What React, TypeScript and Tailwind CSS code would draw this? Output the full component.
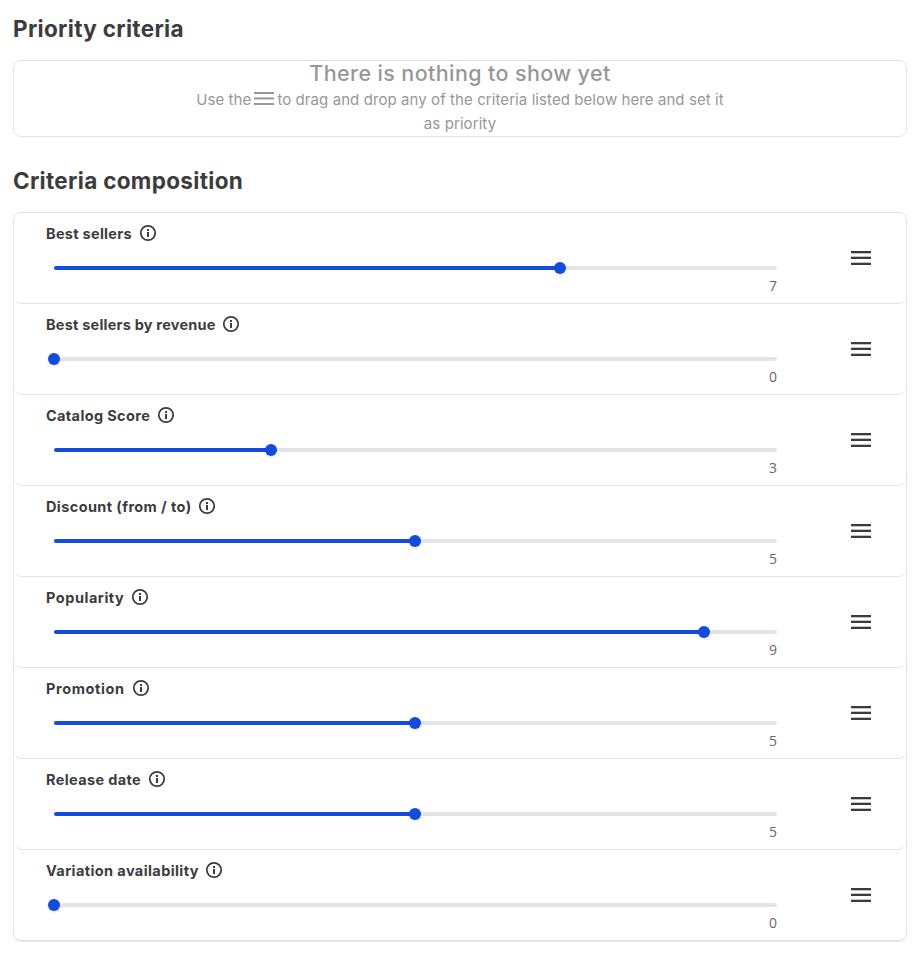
type Criterion = { name: string; value: number; label: string };

const criteria: Criterion[] = [
  { name: "Best sellers", value: 7, label: "w-[86px] tracking-[0.29px]" },
  { name: "Best sellers by revenue", value: 0, label: "w-[169px] tracking-[0.22px]" },
  { name: "Catalog Score", value: 3, label: "w-[104px] tracking-[0.36px]" },
  { name: "Discount (from / to)", value: 5, label: "w-[145px] tracking-[0.4px]" },
  { name: "Popularity", value: 9, label: "w-[78px] tracking-[0.53px]" },
  { name: "Promotion", value: 5, label: "w-[79px] tracking-[0.61px]" },
  { name: "Release date", value: 5, label: "w-[95px] tracking-[0.36px]" },
  { name: "Variation availability", value: 0, label: "w-[152px] tracking-[0.4px]" },
];

function InfoIcon() {
  return (
    <svg width="20" height="20" viewBox="0 0 20 20" className="shrink-0">
      <circle cx="10" cy="10" r="7.2" fill="none" stroke="#3c3c3c" strokeWidth="1.75" />
      <rect x="9" y="6" width="2" height="2" fill="#3c3c3c" />
      <rect x="9" y="9" width="2" height="5" fill="#3c3c3c" />
    </svg>
  );
}

function DragHandle() {
  return (
    <svg width="20" height="14" viewBox="0 0 20 14" fill="#3c3c3c" className="shrink-0">
      <rect width="20" height="2.3" />
      <rect y="5.7" width="20" height="2.3" />
      <rect y="11.7" width="20" height="2.3" />
    </svg>
  );
}

function Slider({ value }: { value: number }) {
  return (
    <div className="relative h-1 w-[723px] rounded-full bg-[#e3e4e6]">
      <div className="h-1 rounded-full bg-[#134bdc]" style={{ width: `${value * 10}%` }} />
      <div
        className="absolute -top-1 -ml-1.5 size-3 rounded-full bg-[#134bdc] shadow-[0_1px_3px_rgba(0,0,0,0.1)]"
        style={{ left: Math.round(value * 72.25) }}
      />
    </div>
  );
}

function CriterionRow({ name, value, label }: Criterion) {
  return (
    <li className="flex h-[91px] items-center justify-between rounded-[8px] border-b border-[#e3e4e6] pr-[35px] pl-8">
      <div className="h-full w-[731px] pt-[10px]">
        <div className="flex h-5 items-center gap-[6px]">
          <span className={`pt-[2px] text-[14.5px] leading-5 font-bold whitespace-nowrap ${label}`}>{name}</span>
          <InfoIcon />
        </div>
        <div className="mt-[23px] ml-2">
          <Slider value={value} />
        </div>
        <div className="mt-[6px] text-right font-['Open_Sans',sans-serif] text-[14px] leading-5 text-[#686868]">{value}</div>
      </div>
      <DragHandle />
    </li>
  );
}

export default function App() {
  return (
    <main className="h-[954px] w-[919px] bg-white pt-[13px] pr-3 pl-[13px] font-['Inter',sans-serif] text-[#3c3c3c]">
      <h2 className="h-8 text-[22.5px] leading-8 font-bold tracking-[0.32px]">Priority criteria</h2>
      <section className="mt-[15px] flex h-[77px] flex-col items-center rounded-[8px] border border-[#e3e4e6] text-[#979797]">
        <h3 className="h-[26px] text-[21.5px] leading-[24px] font-medium tracking-[0.38px] whitespace-nowrap">
          There is nothing to show yet
        </h3>
        <p className="flex h-6 items-center text-[15px] leading-6 tracking-[0.08px] whitespace-nowrap">
          <span className="pt-[2px]">Use the</span>
          <svg width="20" height="13" viewBox="0 0 20 13" fill="#979797" className="mr-[3px] mb-[2px] ml-[3px]">
            <rect width="20" height="2" />
            <rect y="5.4" width="20" height="2" />
            <rect y="11" width="20" height="2" />
          </svg>
          <span className="pt-[2px]">to drag and drop any of the criteria listed below here and set it</span>
        </p>
        <p className="pt-px text-[15px] leading-6 tracking-[0.08px]">as priority</p>
      </section>
      <h2 className="mt-[28px] h-8 text-[22.5px] leading-8 font-bold tracking-[0.32px]">Criteria composition</h2>
      <ul className="mt-[15px] rounded-[8px] border border-[#e3e4e6]">
        {criteria.map((c) => (
          <CriterionRow key={c.name} {...c} />
        ))}
      </ul>
    </main>
  );
}
